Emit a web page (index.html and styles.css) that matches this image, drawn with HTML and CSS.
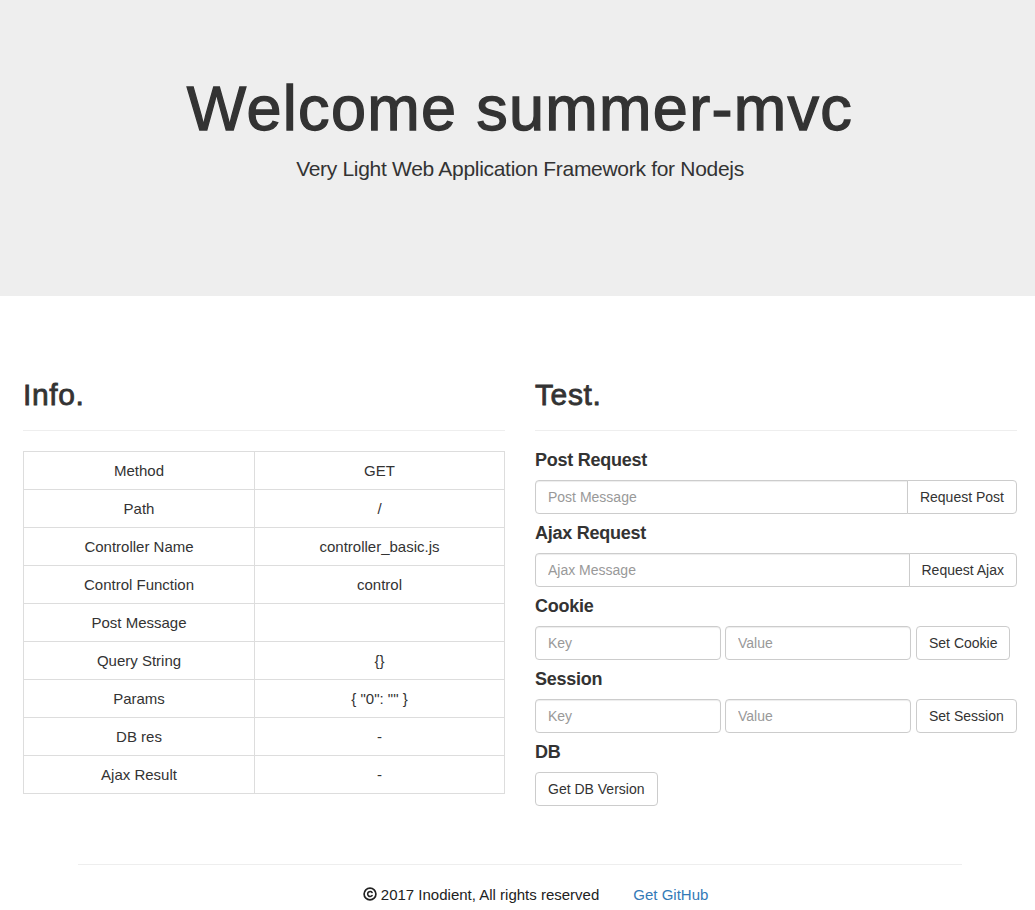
FILE: index.html
```html
<!DOCTYPE html>
<html>
<head>
<meta charset="utf-8">
<title>summer-mvc</title>
<link rel="stylesheet" href="styles.css">
</head>
<body>
<div class="jumbotron">
  <div class="jumbo-inner">
    <h1 class="jumbo-title">Welcome summer-mvc</h1>
    <p class="jumbo-sub">Very Light Web Application Framework for Nodejs</p>
  </div>
</div>

<div class="main">
  <div class="col">
    <div class="page-header"><h2>Info.</h2></div>
    <table class="info-table">
      <tr><td class="k">Method</td><td>GET</td></tr>
      <tr><td class="k">Path</td><td>/</td></tr>
      <tr><td class="k">Controller Name</td><td>controller_basic.js</td></tr>
      <tr><td class="k">Control Function</td><td>control</td></tr>
      <tr><td class="k">Post Message</td><td></td></tr>
      <tr><td class="k">Query String</td><td>{}</td></tr>
      <tr><td class="k">Params</td><td>{ "0": "" }</td></tr>
      <tr><td class="k">DB res</td><td>-</td></tr>
      <tr><td class="k">Ajax Result</td><td>-</td></tr>
    </table>
  </div>
  <div class="col">
    <div class="page-header"><h2>Test.</h2></div>
    <h4 class="label">Post Request</h4>
    <div class="input-group">
      <input class="field grow" type="text" placeholder="Post Message">
      <button class="btn addon">Request Post</button>
    </div>
    <h4 class="label">Ajax Request</h4>
    <div class="input-group">
      <input class="field grow" type="text" placeholder="Ajax Message">
      <button class="btn addon">Request Ajax</button>
    </div>
    <h4 class="label">Cookie</h4>
    <div class="inline-form">
      <input class="field half" type="text" placeholder="Key">
      <input class="field half" type="text" placeholder="Value">
      <button class="btn">Set Cookie</button>
    </div>
    <h4 class="label">Session</h4>
    <div class="inline-form">
      <input class="field half" type="text" placeholder="Key">
      <input class="field half" type="text" placeholder="Value">
      <button class="btn">Set Session</button>
    </div>
    <h4 class="label">DB</h4>
    <div class="inline-form">
      <button class="btn">Get DB Version</button>
    </div>
  </div>
</div>

<footer class="footer">
  <div class="footer-line"></div>
  <p class="footer-text"><span class="copy"><svg class="copy-icon" width="14" height="14" viewBox="0 0 14 14" aria-hidden="true"><circle cx="7" cy="7" r="5.9" fill="none" stroke="#222" stroke-width="1.7"/><path d="M9.1 5.4 A2.5 2.5 0 1 0 9.1 8.6" fill="none" stroke="#222" stroke-width="1.6" stroke-linecap="round"/></svg> 2017 Inodient, All rights reserved</span><a class="gh" href="#">Get GitHub</a></p>
</footer>
</body>
</html>
```
FILE: styles.css
```css
* { box-sizing: border-box; }
html, body { margin: 0; padding: 0; }
body {
  font-family: "Liberation Sans", Arial, Helvetica, sans-serif;
  font-size: 14px;
  line-height: 1.42857;
  color: #333;
  background: #fff;
  width: 1035px;
  overflow: hidden;
}
.jumbotron {
  background: #eee;
  height: 296px;
}
.jumbo-inner {
  margin-left: 8px;
  width: 1024px;
  text-align: center;
  padding-top: 70px;
}
.jumbo-title {
  margin: 0;
  font-size: 63px;
  font-weight: 400;
  line-height: 76px;
  letter-spacing: 1.3px;
  -webkit-text-stroke: 1.3px #333;
}
.jumbo-sub {
  margin: 8px 0 0;
  font-size: 21px;
  font-weight: 300;
  line-height: 30px;
  letter-spacing: -0.3px;
}
.main {
  margin-left: 8px;
  width: 1024px;
  padding: 0 15px;
  display: flex;
  gap: 30px;
}
.col { width: 482px; }
.page-header {
  margin-top: 82px;
  padding-bottom: 19px;
  border-bottom: 1px solid #eee;
  margin-bottom: 20px;
}
.page-header h2 {
  margin: 0;
  font-size: 30px;
  font-weight: 400;
  line-height: 33px;
  letter-spacing: 0.6px;
  -webkit-text-stroke: 0.8px #333;
}
.info-table {
  width: 482px;
  border-collapse: collapse;
  border: 1px solid #ddd;
}
.info-table td {
  border: 1px solid #ddd;
  text-align: center;
  height: 38px;
  padding: 0 8px;
  vertical-align: middle;
  font-size: 15px;
}
.info-table td.k { width: 231px; }
.label {
  margin: 0 0 10px;
  font-size: 18px;
  font-weight: 700;
  line-height: 19px;
  letter-spacing: -0.25px;
}
.input-group + .label, .inline-form + .label { margin-top: 10px; }
.input-group {
  display: flex;
  width: 482px;
  height: 34px;
}
.field {
  height: 34px;
  border: 1px solid #ccc;
  border-radius: 4px;
  padding: 6px 12px;
  font-family: inherit;
  font-size: 14px;
  color: #555;
  box-shadow: inset 0 1px 1px rgba(0,0,0,.075);
  outline: none;
  background: #fff;
}
.field::placeholder { color: #999; }
.grow {
  flex: 1;
  border-radius: 4px 0 0 4px;
  min-width: 0;
}
.btn {
  height: 34px;
  border: 1px solid #ccc;
  border-radius: 4px;
  background: #fff;
  padding: 6px 12px;
  font-family: inherit;
  font-size: 14px;
  line-height: 20px;
  color: #333;
  white-space: nowrap;
}
.addon {
  border-radius: 0 4px 4px 0;
  margin-left: -1px;
}
.inline-form {
  display: flex;
  gap: 5px;
  height: 34px;
}
.half { width: 186px; }
.inline-form .half + .half { margin-left: -1px; }
.footer {
  margin-left: 8px;
  width: 1024px;
  padding: 58px 70px 0;
}
.footer-line {
  border-top: 1px solid #eee;
}
.footer-text {
  margin: 20px 0 0;
  text-align: center;
  font-size: 15px;
  line-height: 20px;
  padding-left: 31px;
}
.copy { margin-right: 34px; color: #222; }
.copy-icon { vertical-align: -1px; }
.gh { color: #337ab7; text-decoration: none; }
```
